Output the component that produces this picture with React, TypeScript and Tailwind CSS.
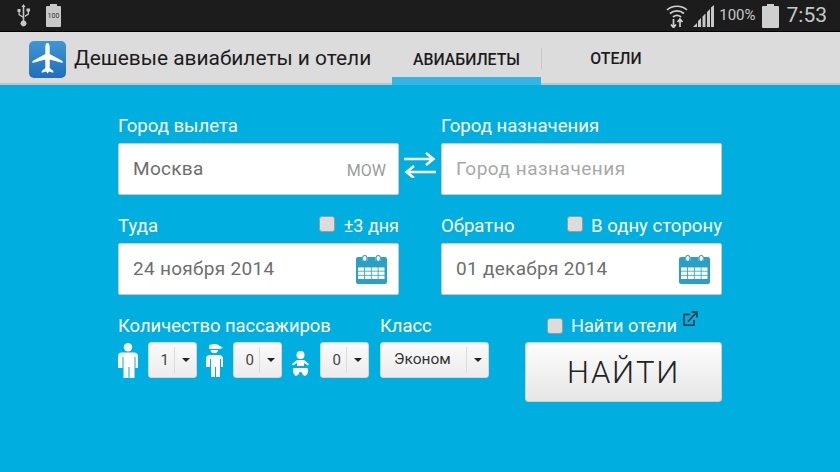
import React from 'react';

const font = { fontFamily: 'Roboto, sans-serif' };

const Plane = () => (
  <svg width="37" height="37" viewBox="0 0 37 37">
    <defs>
      <linearGradient id="tile" x1="0" y1="0" x2="0" y2="1">
        <stop offset="0" stopColor="#3f97d6" />
        <stop offset="1" stopColor="#1f6fb8" />
      </linearGradient>
    </defs>
    <rect width="37" height="37" rx="5" fill="url(#tile)" />
    <path
      d="M18.500 2c1.400 0 2.200 2 2.200 4.500V13l12.800 7v2l-12.800-3.500V27l3.600 3v1.800l-4.300-1.200-1.500 1.800-1.500-1.800-4.300 1.200V30l3.600-3v-8.500L3.500 22v-2l12.800-7V6.500c0-2.500.8-4.500 2.200-4.500z"
      fill="#fff"
    />
  </svg>
);

const Calendar = () => (
  <svg width="31" height="29" viewBox="0 0 30 28" className="shrink-0">
    <path d="M2 2h4v3.500h5V2h8v3.500h5V2h4a2 2 0 0 1 2 2v22a2 2 0 0 1-2 2H2a2 2 0 0 1-2-2V4a2 2 0 0 1 2-2z" fill="#2aa0c4" />
    <rect x="6.500" y="0.500" width="4" height="5.500" rx="2" fill="#fff" stroke="#2aa0c4" strokeWidth="1" />
    <rect x="19.500" y="0.500" width="4" height="5.500" rx="2" fill="#fff" stroke="#2aa0c4" strokeWidth="1" />
    {[12, 16, 20].map((y) =>
      [2, 8.600, 15.200, 21.800].map((x) => <rect key={`${x}-${y}`} x={x} y={y} width="5.800" height="3.200" fill="#fff" />)
    )}
  </svg>
);

const Check = () => <span className="w-[16px] h-[16px] rounded-[3px] bg-[#dcdcdc] border border-[#9c9c9c] shrink-0" />;

const Field = ({ value, muted, code }: { value: string; muted?: boolean; code?: string }) => (
  <div className="h-[52px] bg-white rounded-[2px] border border-[#c9c9c9] pl-[14px] pr-[12px] flex items-center justify-between">
    <span className={muted ? 'text-[19px] tracking-[0.5px] text-[#a8a8a8]' : 'text-[19px] tracking-[0.3px] text-[#6e6e6e]'}>{value}</span>
    {code && <span className="text-[16px] text-[#9c9c9c] mt-[4px]">{code}</span>}
  </div>
);

const DateField = ({ value }: { value: string }) => (
  <div className="h-[52px] bg-white rounded-[2px] border border-[#c9c9c9] pl-[14px] pr-[11px] flex items-center justify-between">
    <span className="text-[19px] tracking-[0.3px] text-[#6e6e6e]">{value}</span>
    <Calendar />
  </div>
);

const Select = ({ value, wide }: { value: string; wide?: boolean }) => (
  <div className={wide ? 'w-[109px] h-[36px] rounded-[3px] bg-gradient-to-b from-[#fbfbfb] to-[#ececec] border border-[#d5d5d5] flex items-center' : 'w-[49px] h-[36px] rounded-[3px] bg-gradient-to-b from-[#fbfbfb] to-[#ececec] border border-[#d5d5d5] flex items-center'}>
    <span className={wide ? 'w-[85px] pl-[13px] text-[15.500px] text-[#333]' : 'w-[25px] text-right pr-[5px] text-[15px] text-[#444]'}>{value}</span>
    <span className="h-[26px] w-px bg-[#dcdcdc]" />
    <span className="flex-1 flex justify-center">
      <span className="w-0 h-0 border-l-[4px] border-r-[4px] border-t-[4px] border-l-transparent border-r-transparent border-t-[#222]" />
    </span>
  </div>
);

const Adult = () => (
  <svg width="20" height="35" viewBox="0 0 20 35" fill="#fff" className="shrink-0">
    <circle cx="10" cy="4.300" r="4.200" />
    <path d="M4 9.500h12a4 4 0 0 1 4 4V25h-2.500V14h-1v21h-5V24h-1v11h-5V14h-1v11H0V13.500a4 4 0 0 1 4-4z" />
  </svg>
);

const Child = () => (
  <svg width="17" height="33" viewBox="0 0 17 33" fill="#fff" className="shrink-0">
    <path d="M3 1.500c3-2 8-2 10 0l4 2.200-3 1.300H3z" />
    <path d="M4.500 6h7.500a3.800 3.800 0 0 1-7.500 0z" />
    <path d="M4 11h9a4 4 0 0 1 4 4v8h-2V15h-1v18h-4V23h-1v10H5V15H4v8H2V23H0v-8a4 4 0 0 1 4-4z" />
  </svg>
);

const Baby = () => (
  <svg width="17" height="25" viewBox="0 0 17 25" fill="#fff" className="shrink-0">
    <circle cx="8.500" cy="4" r="4" />
    <path d="M5 9h7l5 4-1 1.500-4-2.500v3H5v-3L1 14.500 0 13z" />
    <path d="M1.500 17h14c1.200 2.500.7 5.500-1.500 7.500-2 .8-3.800-.8-4.500-3.500h-2c-.7 2.700-2.500 4.300-4.500 3.500C1 22.500.3 19.500 1.500 17z" />
  </svg>
);

const Swap = () => (
  <svg width="32" height="26" viewBox="0 0 32 26" fill="none" stroke="#fff" strokeWidth="2.500">
    <path d="M0 7h29M22 1l7.500 6-7.500 6" />
    <path d="M32 20H3M10 14l-7.500 6 7.500 6" />
  </svg>
);

const External = () => (
  <svg width="15" height="15" viewBox="0 0 15 15" fill="none" stroke="#0b2a38" strokeWidth="1.400" className="-mt-[15px] ml-[6px]">
    <path d="M7 3.500H1v10.800h10V9" />
    <path d="M5 10.500l7.500-8M8.500 1H14v5.500" />
  </svg>
);

export default function App() {
  return (
    <div className="w-[840px] h-[472px] flex flex-col overflow-hidden" style={font}>
      {/* status bar */}
      <div className="h-[32px] bg-[#1c1c1c] border-b border-[#000] flex items-center pl-[16px] pr-[13px]">
        <svg width="15" height="23" viewBox="0 0 15 23" fill="#c8c8c8">
          <path d="M7.500 0l2 3H8.300v13.500a3 3 0 1 1-1.600 0v-2.800L2.500 11V8H1.500V5h3v3h-.8v2.300l3 1.900V3H5.500z" />
          <path d="M10.500 4.500h3.500v3h-1v3l-4 2.500v-1.700l2.700-1.600V7.500h-1.200z" />
        </svg>
        <div className="ml-[15px] w-[15px] h-[23px] flex flex-col items-center">
          <span className="w-[7px] h-[2px] bg-[#c8c8c8]" />
          <span className="w-[15px] h-[21px] bg-[#c8c8c8] rounded-[1px] flex items-center justify-center">
            <span className="text-[7px] leading-none text-[#333]">100</span>
          </span>
        </div>
        <div className="ml-auto flex items-center">
          <svg width="22" height="24" viewBox="0 0 22 24" fill="none" stroke="#d0d0d0" strokeWidth="1.700">
            <path d="M1 6c5-5 15-5 20 0M4 9.500c4-3.500 10-3.500 14 0M7 13c2.500-2 5.500-2 8 0" />
            <path d="M7.500 15v8M5 20.500l2.500 3 2.500-3M14 23v-8M11.500 18l2.500-3 2.500 3" />
          </svg>
          <svg width="21" height="22" viewBox="0 0 21 22" fill="#c8c8c8" className="ml-[5px]">
            <path d="M0 22l4-4v4zM5 22v-6l3-3v9zM9.500 22V11.500l3-3V22zM14 22V7l3-3v18zM18 22V2.500l3-2.500v22z" />
          </svg>
          <span className="ml-[5px] text-[15px] text-[#c8c8c8]">100%</span>
          <svg width="17" height="24" viewBox="0 0 17 24" fill="#cfcfcf" className="ml-[6px]">
            <path d="M5 0h7v2h4a1 1 0 0 1 1 1v20a1 1 0 0 1-1 1H1a1 1 0 0 1-1-1V3a1 1 0 0 1 1-1h4z" />
          </svg>
          <span className="ml-[8px] text-[21px] text-[#c8c8c8]">7:53</span>
        </div>
      </div>

      {/* action bar */}
      <div className="h-[53px] bg-[#dcdcdc] border-b-2 border-[#c4c4c4] flex pl-[29px]">
        <div className="flex items-center w-[363px] shrink-0 pt-[3px]">
          <Plane />
          <span className="ml-[8px] text-[20.900px] text-[#1c1c1c] whitespace-nowrap">Дешевые авиабилеты и отели</span>
        </div>
        <div className="w-[149px] h-[53px] border-b-[8px] border-[#33b5e5] flex items-center justify-center pt-[10px]">
          <span className="text-[15.800px] font-medium text-[#1c1c1c]">АВИАБИЛЕТЫ</span>
        </div>
        <div className="w-px h-[21px] bg-[#c8c8c8] mt-[16px]" />
        <div className="w-[148px] flex items-center justify-center pt-[2px]">
          <span className="text-[15.800px] font-medium text-[#1c1c1c]">ОТЕЛИ</span>
        </div>
      </div>

      {/* form */}
      <div className="flex-1 bg-[#00afdf] pl-[118px] pt-[30px] text-white">
        <div className="flex">
          <div className="w-[281px]">
            <div className="h-[28px] text-[18.600px] leading-[23px]">Город вылета</div>
            <Field value="Москва" code="MOW" />
          </div>
          <div className="w-[42px] pt-[37px] flex justify-center">
            <Swap />
          </div>
          <div className="w-[281px]">
            <div className="h-[28px] text-[18.600px] leading-[23px]">Город назначения</div>
            <Field value="Город назначения" muted />
          </div>
        </div>

        <div className="flex mt-[20px]">
          <div className="w-[281px]">
            <div className="h-[28px] text-[18.600px] leading-[22px] flex justify-between">
              <span>Туда</span>
              <span className="flex items-start">
                <span className="mt-[1px] flex"><Check /></span>
                <span className="ml-[9px] text-[18px]">±3 дня</span>
              </span>
            </div>
            <DateField value="24 ноября 2014" />
          </div>
          <div className="w-[42px]" />
          <div className="w-[281px]">
            <div className="h-[28px] text-[18.600px] leading-[22px] flex justify-between">
              <span>Обратно</span>
              <span className="flex items-start">
                <span className="mt-[1px] flex"><Check /></span>
                <span className="ml-[8px]">В одну сторону</span>
              </span>
            </div>
            <DateField value="01 декабря 2014" />
          </div>
        </div>

        <div className="flex mt-[20px]">
          <div className="w-[407px]">
            <div className="flex h-[27px] text-[18.400px] leading-[22px]">
              <span className="w-[262px] whitespace-nowrap">Количество пассажиров</span>
              <span>Класс</span>
            </div>
            <div className="flex items-center">
              <Adult />
              <div className="ml-[10px]"><Select value="1" /></div>
              <div className="ml-[9px]"><Child /></div>
              <div className="ml-[10px]"><Select value="0" /></div>
              <div className="ml-[10px] mt-[6px]"><Baby /></div>
              <div className="ml-[11px]"><Select value="0" /></div>
              <div className="ml-[11px]"><Select value="Эконом" wide /></div>
            </div>
          </div>
          <div className="w-[197px]">
            <div className="h-[27px] flex items-start justify-center text-[18.200px] leading-[22px]">
              <div className="flex items-center -ml-[2px]">
                <Check />
                <span className="ml-[8px]">Найти отели</span>
                <External />
              </div>
            </div>
            <div className="h-[60px] rounded-[3px] bg-gradient-to-b from-[#fdfdfd] to-[#e6e6e6] border border-[#cfcfcf] flex items-center justify-center pt-[3px]">
              <span className="text-[31px] font-light tracking-[1.800px] text-[#222]">НАЙТИ</span>
            </div>
          </div>
        </div>
      </div>
    </div>
  );
}
